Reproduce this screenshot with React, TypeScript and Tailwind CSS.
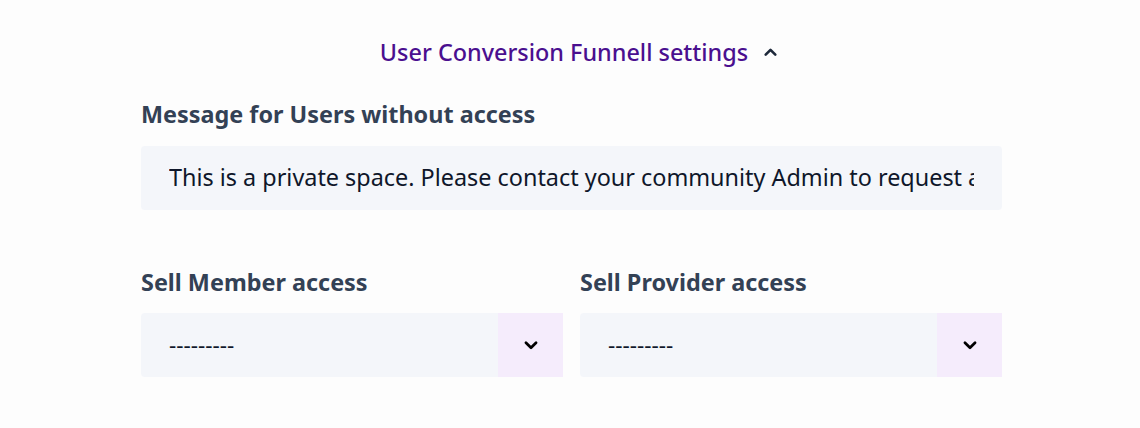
import React from "react";

const font = { fontFamily: '"Noto Sans", "Open Sans", sans-serif' };

const Chevron = ({ up = false, size = 22 }: { up?: boolean; size?: number }) => (
  <svg
    width={size}
    height={size}
    viewBox="0 0 24 24"
    fill="none"
    stroke="currentColor"
    strokeWidth="3"
    strokeLinecap="round"
    strokeLinejoin="round"
  >
    {up ? <path d="M6.5 14.5l5.5-5.5 5.5 5.5" /> : <path d="M6.5 9.5l5.5 5.5 5.5-5.5" />}
  </svg>
);

const SelectField = ({ label }: { label: string }) => (
  <div className="flex flex-col">
    <label className="text-[23.4px] font-bold text-[#334155] leading-8 mb-[15px]">
      {label}
    </label>
    <div className="flex h-16 bg-[#f4f6fa] rounded-l">
      <div className="flex-1 flex items-center pl-7 text-[22.5px] text-[#0f172a]">
        ---------
      </div>
      <div className="w-[65px] flex items-center justify-center bg-[#f5ecfc] text-black">
        <Chevron />
      </div>
    </div>
  </div>
);

export default function App() {
  return (
    <div className="min-h-[428px] bg-[#fdfdfd] pt-[36px]" style={font}>
      <div className="w-[861px] ml-[141px]">
        <button className="mx-auto flex items-center gap-[12px] text-[23.4px] font-medium text-[#4a0f8f] leading-8 pl-[18px]">
          User Conversion Funnell settings
          <span className="text-[#1e293b]">
            <Chevron up size={21} />
          </span>
        </button>

        <label className="block mt-[30px] text-[23.4px] font-bold text-[#334155] leading-8">
          Message for Users without access
        </label>
        <div className="mt-[16px] h-16 bg-[#f4f6fa] rounded flex items-center px-7">
          <div className="flex-1 overflow-hidden whitespace-nowrap text-[23.4px] text-[#0f172a]">
            This is a private space. Please contact your community Admin to request access.
          </div>
        </div>

        <div className="grid grid-cols-2 gap-[17px] mt-[56px]">
          <SelectField label="Sell Member access" />
          <SelectField label="Sell Provider access" />
        </div>
      </div>
    </div>
  );
}
